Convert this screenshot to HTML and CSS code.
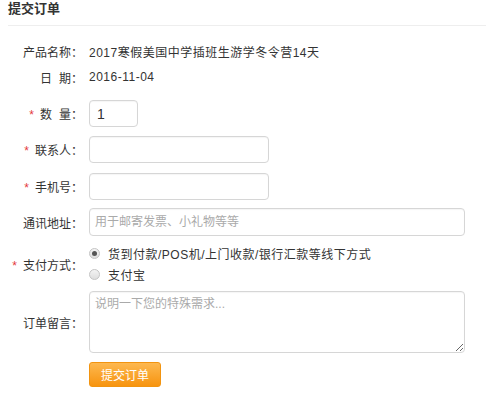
FILE: index.html
```html
<!DOCTYPE html>
<html lang="zh">
<head>
<meta charset="utf-8">
<title>提交订单</title>
<link rel="stylesheet" href="styles.css">
</head>
<body>
<div class="page">
  <h2 class="title">提交订单</h2>
  <form class="form">
    <div class="row info r1">
      <span class="label">产品名称：</span>
      <span class="value text">2017寒假美国中学插班生游学冬令营14天</span>
    </div>
    <div class="row info r2">
      <span class="label">日<i class="sp"></i>期：</span>
      <span class="value text">2016-11-04</span>
    </div>
    <div class="row r3">
      <span class="label"><b class="req">*</b>数<i class="sp"></i>量：</span>
      <span class="value"><input class="input qty" type="text" value="1"></span>
    </div>
    <div class="row r4">
      <span class="label"><b class="req">*</b>联系人：</span>
      <span class="value"><input class="input mid" type="text"></span>
    </div>
    <div class="row r5">
      <span class="label"><b class="req">*</b>手机号：</span>
      <span class="value"><input class="input mid" type="text"></span>
    </div>
    <div class="row r6">
      <span class="label">通讯地址：</span>
      <span class="value"><input class="input wide" type="text" placeholder="用于邮寄发票、小礼物等等"></span>
    </div>
    <div class="row r7">
      <span class="label"><b class="req">*</b>支付方式：</span>
      <span class="value radios">
        <span class="radio text"><i class="dot checked"></i>货到付款/POS机/上门收款/银行汇款等线下方式</span>
        <span class="radio text"><i class="dot"></i>支付宝</span>
      </span>
    </div>
    <div class="row r8">
      <span class="label">订单留言：</span>
      <span class="value"><textarea class="input area" placeholder="说明一下您的特殊需求..."></textarea></span>
    </div>
    <div class="row r9">
      <span class="label"></span>
      <span class="value"><button type="button" class="btn">提交订单</button></span>
    </div>
  </form>
</div>
</body>
</html>
```

FILE: styles.css
```css
* { box-sizing: border-box; }
body {
  margin: 0;
  background: #fff;
  color: #333;
  font-family: "Liberation Sans", "Noto Sans CJK SC", sans-serif;
  font-size: 12px;
}
.page { padding: 0 0 0 8px; }
.title {
  margin: 0;
  padding: 1px 0 8px;
  line-height: 16px;
  font-size: 13px;
  font-weight: bold;
  color: #333;
  border-bottom: 1px solid #eeeeee;
}
.form { margin-top: 15px; }
.row {
  display: grid;
  grid-template-columns: 75px 1fr;
  column-gap: 6px;
  align-items: center;
}
.label {
  text-align: right;
  white-space: nowrap;
  color: #333;
}
.value { color: #333; }
.text { letter-spacing: 0.5px; }
.sp { display: inline-block; width: 7px; }
.req {
  color: #e4393c;
  font-weight: normal;
  margin-right: 6px;
}
.info { height: 20px; }
.r1 { margin-bottom: 6px; }
.r2 { margin-bottom: 13px; }
.r3 { margin-bottom: 9px; }
.r4 { margin-bottom: 10px; }
.r5 { margin-bottom: 8px; }
.r6 { margin-bottom: 7px; }
.r7 { margin-bottom: 6px; }
.r8 { margin-bottom: 9px; }
.input {
  display: block;
  border: 1px solid #d6d6d6;
  border-radius: 4px;
  background: #fff;
  font-family: "Liberation Sans", "Noto Sans CJK SC", sans-serif;
  font-size: 12px;
  color: #333;
  padding: 0 5px;
  height: 27px;
  outline: none;
  box-shadow: inset 0 1px 1px rgba(0,0,0,0.04);
}
.input::placeholder { color: #aaa; }
.qty { width: 49px; font-size: 14px; padding-left: 7px; }
.mid { width: 180px; }
.wide { width: 376px; height: 28px; }
.area {
  width: 376px;
  height: 62px;
  padding: 4px 5px;
  resize: vertical;
  line-height: 16px;
}
.radios { display: flex; flex-direction: column; }
.radio {
  display: flex;
  align-items: center;
  height: 21px;
}
.dot {
  display: inline-block;
  flex: none;
  width: 11px;
  height: 11px;
  margin: 0 8px 0 0;
  border-radius: 50%;
  border: 1px solid #c4c4c4;
  background: linear-gradient(#f4f4f4, #dedede);
  position: relative;
}
.dot.checked::after {
  content: "";
  position: absolute;
  left: 2px;
  top: 2px;
  width: 5px;
  height: 5px;
  border-radius: 50%;
  background: #555;
}
.btn {
  width: 72px;
  height: 25px;
  border: 1px solid #f29410;
  border-radius: 3px;
  background: linear-gradient(#fdb850, #f7940f);
  color: #fff;
  font-family: "Liberation Sans", "Noto Sans CJK SC", sans-serif;
  font-size: 12px;
  padding: 0;
  cursor: pointer;
}
```
